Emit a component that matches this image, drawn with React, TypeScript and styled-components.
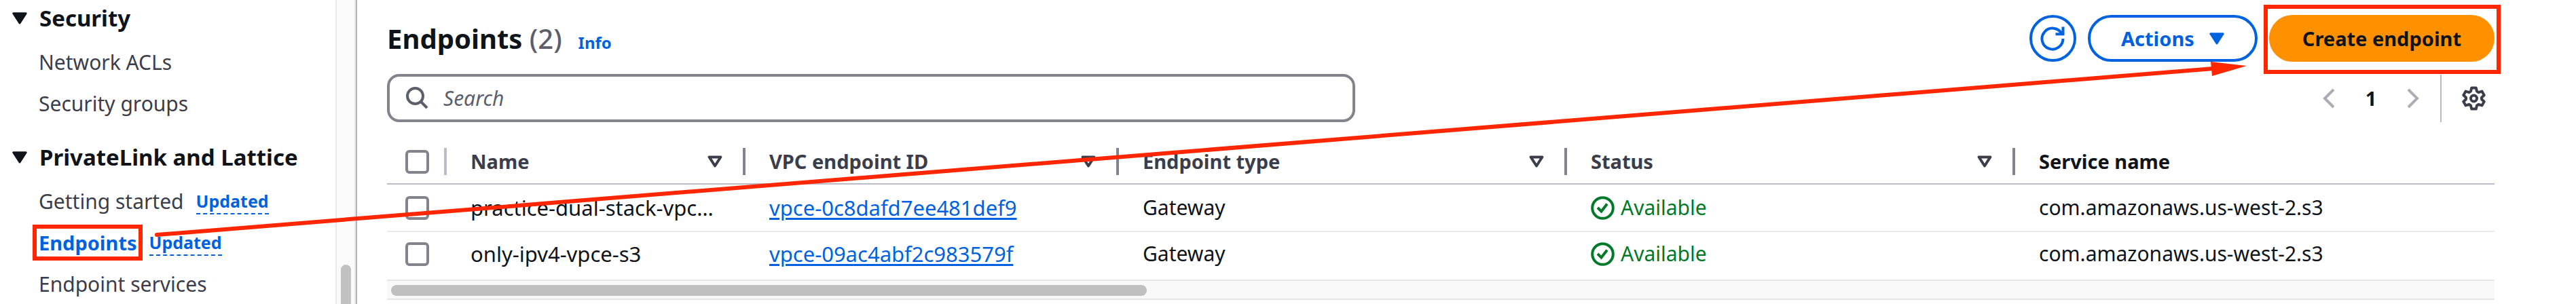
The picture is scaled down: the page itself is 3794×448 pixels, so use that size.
import React from 'react';
import styled, { createGlobalStyle } from 'styled-components';

const color = {
  text: '#0f141a',
  label: '#3b3e4a',
  muted: '#5c5f6b',
  link: '#0062e0',
  control: '#83838d',
  divider: '#bcbcc6',
  row: '#e9e9f0',
  green: '#007a29',
  orange: '#ff9000',
  mark: '#ff2600',
};

const GlobalStyle = createGlobalStyle`
  * { box-sizing: border-box; }
  body {
    margin: 0;
    background: #fff;
    color: ${color.text};
    font: 400 30px/40px 'Noto Sans', sans-serif;
  }
  button, input { font: inherit; color: inherit; }
  svg { display: block; flex: none; }
`;

const Page = styled.div`
  position: relative;
  display: flex;
  min-height: 100vh;
  overflow: hidden;
`;

const Sidebar = styled.aside`
  display: flex;
  flex: 0 0 526px;
  border-right: 2px solid #b3b3bc;
`;

const Nav = styled.nav`
  flex: 1;
  min-width: 0;
`;

const Section = styled.section`
  & + & { margin-top: 22px; }
`;

const SectionToggle = styled.button`
  display: flex;
  align-items: center;
  gap: 18px;
  height: 54px;
  margin: 0 0 7px;
  padding: 0 0 0 18px;
  border: 0;
  background: none;
  font-size: 33px;
  font-weight: 700;
`;

const NavList = styled.ul`
  margin: 0;
  padding: 0 0 0 57px;
  list-style: none;
`;

const NavItem = styled.li`
  display: flex;
  align-items: center;
  height: 61px;
  gap: 18px;
`;

const NavLink = styled.a<{ $current?: boolean }>`
  position: relative;
  color: ${p => (p.$current ? color.link : color.label)};
  font-size: ${p => (p.$current ? 29 : 30)}px;
  font-weight: ${p => (p.$current ? 700 : 400)};
  text-decoration: none;
`;

const NavHighlight = styled.span`
  position: absolute;
  inset: -7px -8px -6px -9px;
  border: 6px solid ${color.mark};
`;

const Updated = styled.button`
  height: 38px;
  padding: 0;
  border: 0;
  border-bottom: 2px dashed ${color.link};
  background: none;
  color: ${color.link};
  font-size: 25px;
  font-weight: 700;
  line-height: 36px;
`;

const NavTrack = styled.div`
  flex: 0 0 30px;
  padding: 390px 5px 0 6px;
  border: solid #e9e9e9;
  border-width: 0 2px;
  background: #fafafa;
`;

const NavThumb = styled.div`
  height: 100%;
  border-radius: 8px 8px 0 0;
  background: #c1c1c1;
`;

const Main = styled.main`
  flex: 1;
  min-width: 0;
  padding: 22px 120px 0 44px;
`;

const Header = styled.header`
  display: flex;
  align-items: center;
  justify-content: space-between;
  height: 69px;
`;

const TitleGroup = styled.div`
  display: flex;
  align-items: baseline;
  gap: 24px;
`;

const Title = styled.h1`
  margin: 0;
  font-size: 40px;
  font-weight: 700;
  line-height: 54px;
`;

const Count = styled.span`
  color: ${color.muted};
  font-weight: 500;
`;

const InfoLink = styled.a`
  color: ${color.link};
  font-size: 24px;
  font-weight: 700;
  text-decoration: none;
`;

const Actions = styled.div`
  display: flex;
  gap: 17px;
`;

const Button = styled.button<{ $primary?: boolean }>`
  position: relative;
  display: flex;
  align-items: center;
  gap: 22px;
  height: 69px;
  padding: 0 45px;
  border: 4px solid ${p => (p.$primary ? color.orange : color.link)};
  border-radius: 35px;
  background: ${p => (p.$primary ? color.orange : '#fff')};
  color: ${p => (p.$primary ? color.text : color.link)};
  font-size: 29px;
  font-weight: 700;
  white-space: nowrap;
`;

const RoundButton = styled(Button)`
  width: 69px;
  padding: 0;
  justify-content: center;
`;

const ButtonHighlight = styled.span`
  position: absolute;
  inset: -19px -13px -22px -12px;
  border: 6px solid ${color.mark};
`;

const Toolbar = styled.div`
  display: flex;
  align-items: center;
  justify-content: space-between;
  margin-top: 18px;
`;

const SearchBox = styled.label`
  display: flex;
  align-items: center;
  gap: 22px;
  flex: 0 1 1426px;
  height: 71px;
  padding: 0 24px;
  border: 4px solid ${color.control};
  border-radius: 18px;
`;

const SearchInput = styled.input`
  flex: 1;
  min-width: 0;
  padding: 0;
  border: 0;
  outline: 0;
  background: none;
  &::placeholder {
    color: ${color.muted};
    font-style: italic;
    opacity: 1;
  }
`;

const Pager = styled.div`
  display: flex;
  align-items: center;
  height: 71px;
`;

const IconButton = styled.button`
  display: flex;
  padding: 0;
  border: 0;
  background: none;
`;

const PageNumber = styled.button`
  width: 106px;
  padding: 0;
  border: 0;
  background: none;
  font-size: 29px;
  font-weight: 700;
`;

const Preferences = styled.div`
  display: flex;
  align-items: center;
  height: 70px;
  margin-left: 31px;
  padding: 0 13px 0 30px;
  border-left: 2px solid ${color.divider};
`;

const Table = styled.table`
  width: 100%;
  margin-top: 26px;
  border-collapse: separate;
  border-spacing: 0;
  table-layout: fixed;
`;

const Column = styled.col<{ $width?: number }>`
  width: ${p => (p.$width ? `${p.$width}px` : 'auto')};
`;

const HeadCell = styled.th<{ $plain?: boolean }>`
  height: 66px;
  padding: 0;
  border-bottom: 2px solid ${color.divider};
  color: ${p => (p.$plain ? color.text : color.label)};
  font-size: 29px;
  font-weight: 700;
  text-align: left;
`;

const HeadContent = styled.div<{ $select?: boolean; $last?: boolean }>`
  display: flex;
  align-items: center;
  justify-content: space-between;
  height: 40px;
  padding: ${p => (p.$select ? '0 0 0 27px' : '0 30px 0 35px')};
  border-right: ${p => (p.$last ? 0 : 4)}px solid ${p => (p.$select ? color.divider : color.control)};
`;

const Cell = styled.td<{ $last?: boolean; $select?: boolean; $wide?: boolean }>`
  height: ${p => (p.$last ? 64 : 70)}px;
  padding: 0 36px 0 ${p => (p.$select ? 27 : 35)}px;
  border-bottom: ${p => (p.$last ? 0 : 2)}px solid ${color.row};
  font-size: ${p => (p.$wide ? 31 : 30)}px;
  overflow: hidden;
  white-space: nowrap;
`;

const Checkbox = styled.input`
  appearance: none;
  display: block;
  width: 35px;
  height: 35px;
  margin: 0;
  border: 4px solid ${color.control};
  border-radius: 6px;
  background: #fff;
`;

const IdLink = styled.a`
  color: ${color.link};
  text-decoration: underline;
  text-decoration-thickness: 3px;
  text-underline-offset: 3px;
`;

const Status = styled.span`
  display: flex;
  align-items: center;
  gap: 9px;
  color: ${color.green};
`;

const TableTrack = styled.div`
  height: 30px;
  margin-top: 6px;
  padding: 6px;
  border: solid #e6e6e6;
  border-width: 2px 0;
  background: #f9f9f9;
`;

const TableThumb = styled.div`
  width: 36%;
  height: 16px;
  border-radius: 8px;
  background: #c0c0c0;
`;

const Arrow = styled.svg`
  position: absolute;
  inset: 0;
  width: 100%;
  height: 448px;
  pointer-events: none;
`;

const Caret = () => (
  <svg width="22" height="18" viewBox="0 0 22 18" fill="currentColor" stroke="currentColor" strokeWidth="3" strokeLinejoin="round" aria-hidden>
    <path d="M1.8 1.8H20.2L11 16z" />
  </svg>
);

const SortIcon = () => (
  <svg width="22" height="18" viewBox="0 0 22 18" fill="none" stroke="currentColor" strokeWidth="4" strokeLinejoin="round" aria-hidden>
    <path d="M2.6 2.5H19.4L11 15.5z" />
  </svg>
);

const RefreshIcon = () => (
  <svg width="36" height="36" viewBox="0 0 36 36" fill="none" stroke="currentColor" strokeWidth="4" aria-hidden>
    <path d="M33.5 18A15.5 15.5 0 1 1 31.4 10.3M33.5 .5V11.3M22.5 11.3H35.5" />
  </svg>
);

const SearchIcon = () => (
  <svg width="33" height="33" viewBox="0 0 33 33" fill="none" stroke={color.muted} strokeWidth="4" aria-hidden>
    <circle cx="13.5" cy="13.5" r="11.5" />
    <path d="M21.5 21.5L31 31" />
  </svg>
);

const Chevron = ({ next }: { next?: boolean }) => (
  <svg width="18" height="30" viewBox="0 0 18 30" fill="none" stroke="#acacb5" strokeWidth="4" aria-hidden>
    <path d={next ? 'M2 2L15 15L2 28' : 'M16 2L3 15L16 28'} />
  </svg>
);

const CheckIcon = () => (
  <svg width="35" height="35" viewBox="0 0 35 35" fill="none" stroke="currentColor" strokeWidth="4" aria-hidden>
    <circle cx="17.5" cy="17.5" r="15.3" />
    <path d="M10 17L15.5 22.5L24 11.5" />
  </svg>
);

const GearIcon = () => (
  <svg width="35" height="36" viewBox="0 0 35 36" fill="none" stroke={color.label} strokeWidth="4" strokeLinejoin="round" aria-hidden>
    <path d="M14.2 2.5H20.8L22 7.6L24.6 9.2L29.4 7.6L32.7 13.3L29 16.8V19.2L32.7 22.7L29.4 28.4L24.6 26.8L22 28.4L20.8 33.5H14.2L13 28.4L10.4 26.8L5.6 28.4L2.3 22.7L6 19.2V16.8L2.3 13.3L5.6 7.6L10.4 9.2L13 7.6z" />
    <circle cx="17.5" cy="18" r="4.5" />
  </svg>
);

const endpoints = [
  { name: 'practice-dual-stack-vpc…', id: 'vpce-0c8dafd7ee481def9' },
  { name: 'only-ipv4-vpce-s3', id: 'vpce-09ac4abf2c983579f' },
];

const sortable = ['Name', 'VPC endpoint ID', 'Endpoint type', 'Status'];

export default function App() {
  return (
    <Page>
      <GlobalStyle />
      <Sidebar>
        <Nav aria-label="VPC">
          <Section>
            <SectionToggle><Caret />Security</SectionToggle>
            <NavList>
              <NavItem><NavLink href="#acls">Network ACLs</NavLink></NavItem>
              <NavItem><NavLink href="#groups">Security groups</NavLink></NavItem>
            </NavList>
          </Section>
          <Section>
            <SectionToggle><Caret />PrivateLink and Lattice</SectionToggle>
            <NavList>
              <NavItem>
                <NavLink href="#start">Getting started</NavLink>
                <Updated>Updated</Updated>
              </NavItem>
              <NavItem>
                <NavLink href="#endpoints" $current>Endpoints<NavHighlight /></NavLink>
                <Updated>Updated</Updated>
              </NavItem>
              <NavItem><NavLink href="#services">Endpoint services</NavLink></NavItem>
            </NavList>
          </Section>
        </Nav>
        <NavTrack><NavThumb /></NavTrack>
      </Sidebar>

      <Main>
        <Header>
          <TitleGroup>
            <Title>Endpoints <Count>(2)</Count></Title>
            <InfoLink href="#info">Info</InfoLink>
          </TitleGroup>
          <Actions>
            <RoundButton aria-label="Refresh"><RefreshIcon /></RoundButton>
            <Button>Actions<Caret /></Button>
            <Button $primary>Create endpoint<ButtonHighlight /></Button>
          </Actions>
        </Header>

        <Toolbar>
          <SearchBox>
            <SearchIcon />
            <SearchInput type="text" placeholder="Search" aria-label="Search" />
          </SearchBox>
          <Pager>
            <IconButton aria-label="Previous page"><Chevron /></IconButton>
            <PageNumber>1</PageNumber>
            <IconButton aria-label="Next page"><Chevron next /></IconButton>
            <Preferences>
              <IconButton aria-label="Preferences"><GearIcon /></IconButton>
            </Preferences>
          </Pager>
        </Toolbar>

        <Table>
          <colgroup>
            <Column $width={88} />
            <Column $width={440} />
            <Column $width={550} />
            <Column $width={660} />
            <Column $width={660} />
            <Column />
          </colgroup>
          <thead>
            <tr>
              <HeadCell>
                <HeadContent $select><Checkbox type="checkbox" aria-label="Select all" /></HeadContent>
              </HeadCell>
              {sortable.map(title => (
                <HeadCell key={title}>
                  <HeadContent>{title}<SortIcon /></HeadContent>
                </HeadCell>
              ))}
              <HeadCell $plain><HeadContent $last>Service name</HeadContent></HeadCell>
            </tr>
          </thead>
          <tbody>
            {endpoints.map(({ name, id }, i) => {
              const last = i === endpoints.length - 1;
              return (
                <tr key={id}>
                  <Cell $last={last} $select><Checkbox type="checkbox" aria-label={name} /></Cell>
                  <Cell $last={last} $wide>{name}</Cell>
                  <Cell $last={last} $wide><IdLink href={`#${id}`}>{id}</IdLink></Cell>
                  <Cell $last={last}>Gateway</Cell>
                  <Cell $last={last}><Status><CheckIcon />Available</Status></Cell>
                  <Cell $last={last}>com.amazonaws.us-west-2.s3</Cell>
                </tr>
              );
            })}
          </tbody>
        </Table>
        <TableTrack><TableThumb /></TableTrack>
      </Main>

      <Arrow viewBox="0 0 3794 448" preserveAspectRatio="none" aria-hidden>
        <path d="M231 346L3260 101" stroke={color.mark} strokeWidth="6" strokeLinecap="round" />
        <path d="M3256 91L3309 97L3258 112z" fill={color.mark} />
      </Arrow>
    </Page>
  );
}
